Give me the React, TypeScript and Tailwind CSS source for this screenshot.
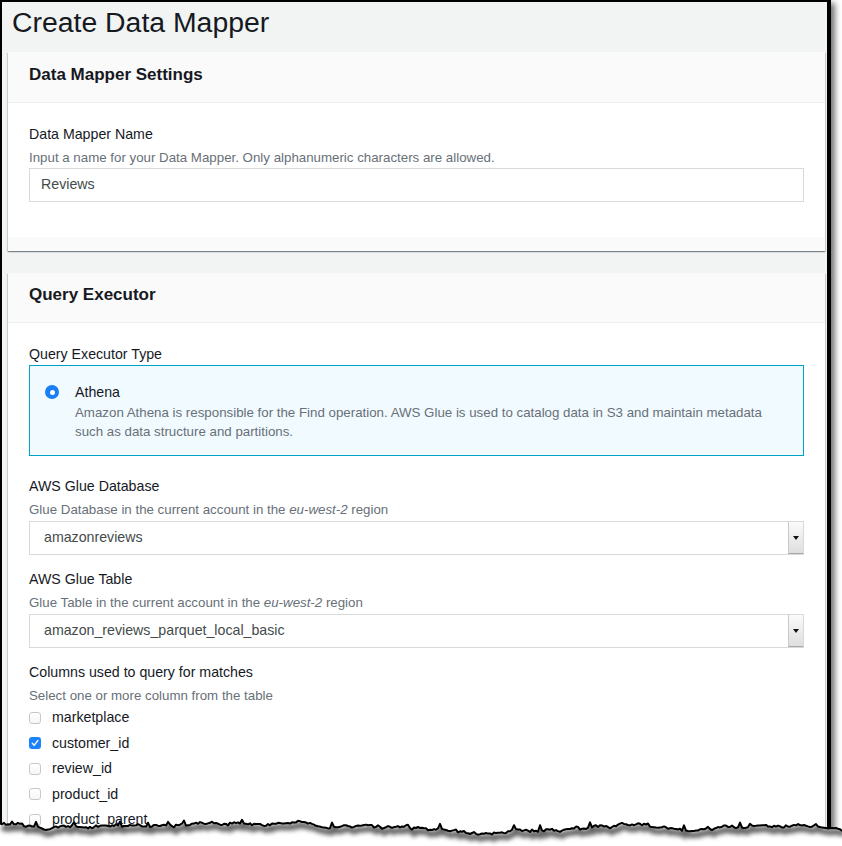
import React from "react";

const basePts: [number, number][] = [
  [0, 823], [40, 828], [100, 826], [160, 825], [230, 824], [300, 823], [330, 827],
  [380, 827], [440, 829], [480, 834], [520, 831], [560, 830], [600, 827], [640, 824],
  [690, 832], [720, 828], [760, 826], [800, 826], [842, 829],
];

function buildEdge(): string[] {
  let s = 98765;
  const rnd = () => {
    s = (s * 16807) % 2147483647;
    return s / 2147483647;
  };
  const out: string[] = [];
  let drift = 0;
  for (let x = 0; x <= 842; x += 2) {
    let i = 0;
    while (i < basePts.length - 2 && basePts[i + 1][0] < x) i++;
    const [x0, y0] = basePts[i];
    const [x1, y1] = basePts[i + 1];
    const t = Math.min(1, Math.max(0, (x - x0) / (x1 - x0)));
    drift = drift * 0.7 + (rnd() - 0.5) * 2.2;
    let y = y0 + (y1 - y0) * t + drift + (rnd() - 0.5) * 1.6;
    if (rnd() < 0.05) y -= 2.5 + rnd() * 3;
    out.push(`${x.toFixed(1)},${y.toFixed(1)}`);
  }
  return out;
}

const edge = buildEdge();
const linePath = "M " + edge.join(" L ");
const fillPath = linePath + " L 842,846 L 0,846 Z";

function TornEdge() {
  return (
    <svg
      className="absolute left-0 top-0 pointer-events-none"
      width="842"
      height="846"
      viewBox="0 0 842 846"
    >
      <defs>
        <clipPath id="below">
          <path d={fillPath} />
        </clipPath>
        <filter id="blur" x="-10%" y="-50%" width="120%" height="200%">
          <feGaussianBlur stdDeviation="2.2" />
        </filter>
      </defs>
      <path d={fillPath} fill="#ffffff" />
      <g clipPath="url(#below)">
        <path
          d={linePath}
          transform="translate(2,4)"
          fill="none"
          stroke="#000"
          strokeOpacity="0.6"
          strokeWidth="6"
          filter="url(#blur)"
        />
      </g>
      <path d={linePath} fill="none" stroke="#000" strokeWidth="2" strokeLinejoin="round" />
    </svg>
  );
}

function Label({ children }: { children: React.ReactNode }) {
  return <div className="text-[14.2px] leading-[20px] text-[#16191f]">{children}</div>;
}

function Desc({ children }: { children: React.ReactNode }) {
  return <div className="mt-[5px] text-[13.3px] leading-[18px] text-[#687078]">{children}</div>;
}

function SelectBox({ value }: { value: string }) {
  return (
    <div className="mt-[2px] h-[34px] flex border border-[#d5dbdb] bg-white">
      <div className="flex-1 flex items-center pl-[14px] text-[14.2px] text-[#444b4b]">{value}</div>
      <div className="w-[15px] h-full flex items-center justify-center bg-gradient-to-b from-[#fbfbfb] to-[#dedede] border-l border-[#c9c9c9] border-b border-b-[#a8a8a8]">
        <svg width="6" height="4" viewBox="0 0 6 4">
          <path d="M0 0 L6 0 L3 4 Z" fill="#111" />
        </svg>
      </div>
    </div>
  );
}

function Checkbox({ checked, label }: { checked?: boolean; label: string }) {
  return (
    <div className="h-[25.5px] flex items-center gap-[11px]">
      {checked ? (
        <div className="w-[12px] h-[12px] rounded-[3px] bg-[#1a82fb] flex items-center justify-center">
          <svg width="8" height="8" viewBox="0 0 8 8">
            <path d="M1.3 4.3 L3.2 6.2 L6.8 1.6" fill="none" stroke="#fff" strokeWidth="1.4" strokeLinecap="round" strokeLinejoin="round" />
          </svg>
        </div>
      ) : (
        <div className="w-[12px] h-[12px] rounded-[3px] border border-[#c8c8c8] bg-gradient-to-b from-white to-[#f6f6f6]" />
      )}
      <span className="text-[14.2px] text-[#16191f]">{label}</span>
    </div>
  );
}

const cardShadow =
  "shadow-[0_1px_1px_0_rgba(0,28,36,0.35),1px_1px_1px_0_rgba(0,28,36,0.12),-1px_1px_1px_0_rgba(0,28,36,0.12)]";

export default function App() {
  return (
    <div className="relative w-[842px] h-[846px] bg-white overflow-hidden font-['Liberation_Sans',Arial,sans-serif]">
      <div className="w-[831px] h-[846px] border-l-2 border-t-2 border-r-[4px] border-black bg-[#f2f3f3] shadow-[4px_3px_6px_rgba(0,0,0,0.55)] pl-[6px] pr-[2px]">
        <h1 className="pt-[3px] pl-[4px] mb-[13px] text-[28.4px] leading-[34px] text-[#16191f] font-normal">
          Create Data Mapper
        </h1>

        <section className={`bg-white ${cardShadow}`}>
          <div className="h-[51px] px-[21px] pt-[12px] bg-[#fafafa] border-b border-[#eef0f0] text-[17px] leading-[22px] font-bold text-[#16191f]">
            Data Mapper Settings
          </div>
          <div className="px-[21px] pt-[21px] pb-[35px]">
            <Label>Data Mapper Name</Label>
            <Desc>Input a name for your Data Mapper. Only alphanumeric characters are allowed.</Desc>
            <div className="mt-[1px] h-[34px] flex items-center border border-[#d5dbdb] bg-white pl-[11px] text-[14.2px] text-[#444b4b]">
              Reviews
            </div>
          </div>
          <div className="h-[14px] bg-[#fafafa]" />
        </section>

        <section className={`mt-[22px] bg-white ${cardShadow}`}>
          <div className="h-[50px] px-[21px] pt-[11px] bg-[#fafafa] border-b border-[#eef0f0] text-[17px] leading-[22px] font-bold text-[#16191f]">
            Query Executor
          </div>
          <div className="px-[21px] pt-[21px] pb-[40px]">
            <Label>Query Executor Type</Label>
            <div className="mt-[1px] flex border border-[#00a1c9] bg-[#f1faff] pl-[15px] pt-[16px] pb-[14px]">
              <div className="h-[20px] flex items-center">
                <div className="w-[14px] h-[14px] rounded-full bg-[#1a7ff5] flex items-center justify-center">
                  <div className="w-[5px] h-[5px] rounded-full bg-white" />
                </div>
              </div>
              <div className="ml-[16px]">
                <div className="text-[14.2px] leading-[20px] text-[#16191f]">Athena</div>
                <div className="mt-[1px] text-[13.3px] leading-[19px] text-[#687078]">
                  Amazon Athena is responsible for the Find operation. AWS Glue is used to catalog data in S3 and maintain metadata
                  <br />
                  such as data structure and partitions.
                </div>
              </div>
            </div>

            <div className="mt-[20px]">
              <Label>AWS Glue Database</Label>
              <Desc>
                Glue Database in the current account in the <i>eu-west-2</i> region
              </Desc>
              <SelectBox value="amazonreviews" />
            </div>

            <div className="mt-[14px]">
              <Label>AWS Glue Table</Label>
              <Desc>
                Glue Table in the current account in the <i>eu-west-2</i> region
              </Desc>
              <SelectBox value="amazon_reviews_parquet_local_basic" />
            </div>

            <div className="mt-[14px]">
              <Label>Columns used to query for matches</Label>
              <Desc>Select one or more column from the table</Desc>
              <div>
                <Checkbox label="marketplace" />
                <Checkbox checked label="customer_id" />
                <Checkbox label="review_id" />
                <Checkbox label="product_id" />
                <Checkbox label="product_parent" />
              </div>
            </div>
          </div>
        </section>
      </div>
      <TornEdge />
    </div>
  );
}
